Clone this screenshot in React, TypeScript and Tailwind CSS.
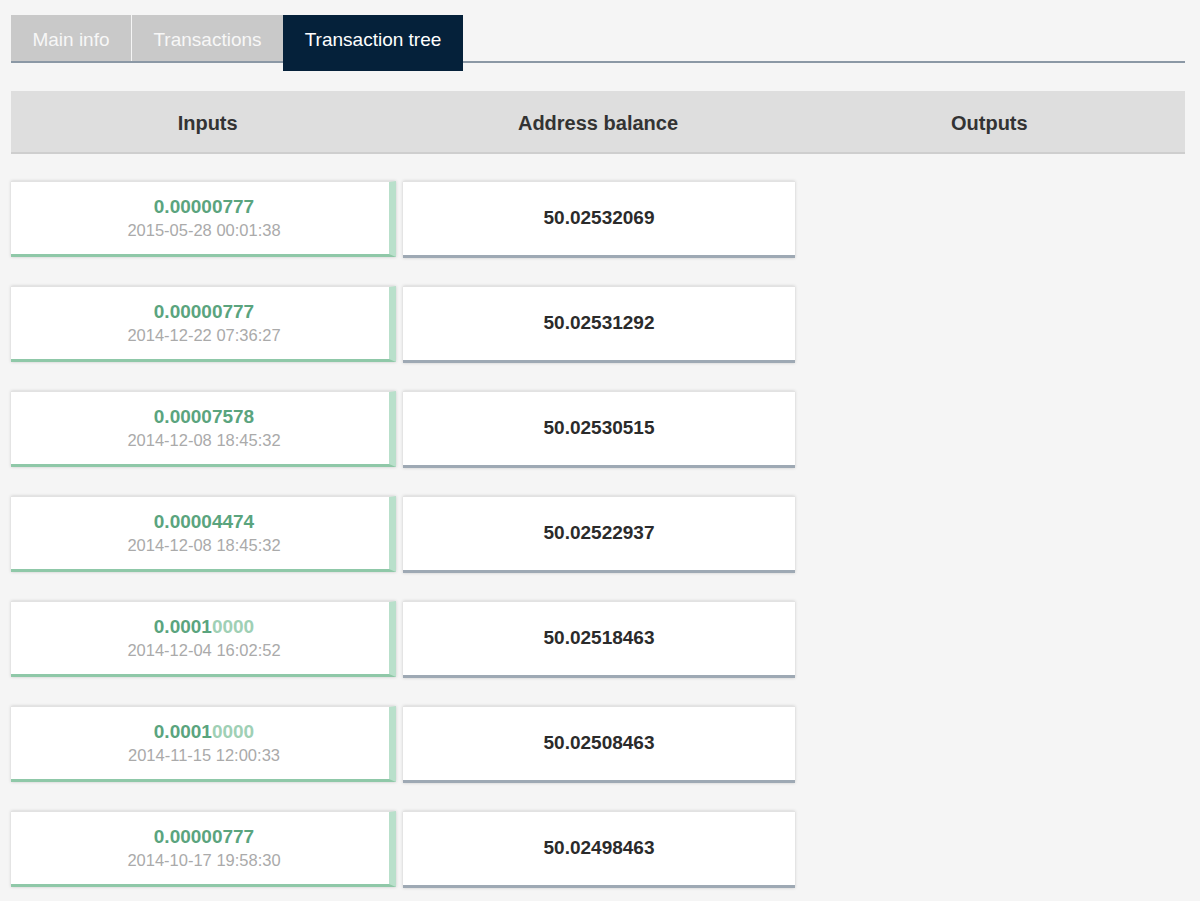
import React from 'react';

type Row = {
  amount: string;
  trail?: string;
  date: string;
  balance: string;
};

const rows: Row[] = [
  { amount: '0.00000777', date: '2015-05-28 00:01:38', balance: '50.02532069' },
  { amount: '0.00000777', date: '2014-12-22 07:36:27', balance: '50.02531292' },
  { amount: '0.00007578', date: '2014-12-08 18:45:32', balance: '50.02530515' },
  { amount: '0.00004474', date: '2014-12-08 18:45:32', balance: '50.02522937' },
  { amount: '0.0001', trail: '0000', date: '2014-12-04 16:02:52', balance: '50.02518463' },
  { amount: '0.0001', trail: '0000', date: '2014-11-15 12:00:33', balance: '50.02508463' },
  { amount: '0.00000777', date: '2014-10-17 19:58:30', balance: '50.02498463' },
];

const tabs = ['Main info', 'Transactions', 'Transaction tree'];

export default function App() {
  return (
    <div className="min-h-[901px] bg-[#f5f5f5] pl-[11px] pr-[15px] pt-[15px] font-[family-name:Liberation_Sans,Arial,sans-serif]">
      {/* Tabs */}
      <div className="flex items-start border-b-2 border-[#8b98a5] h-[48px]">
        {tabs.map((tab, i) => {
          const active = i === tabs.length - 1;
          return (
            <div
              key={tab}
              className={
                active
                  ? 'h-[56px] w-[180px] bg-[#05213a] text-white text-[19px] flex items-start pt-[11px] justify-center'
                  : `h-[46px] bg-[#c9c9c9] text-[#f7f7f7] text-[19px] flex items-start pt-[11px] justify-center ${
                      i === 0 ? 'w-[121px] border-r border-[#f5f5f5]' : 'w-[151px]'
                    }`
              }
            >
              {tab}
            </div>
          );
        })}
      </div>

      {/* Column header */}
      <div className="mt-[28px] grid grid-cols-3 h-[63px] pt-[3px] bg-[#dedede] border-b-2 border-[#cecece] text-[20px] font-bold text-[#333]">
        <div className="flex items-center justify-center pl-[2px]">Inputs</div>
        <div className="flex items-center justify-center">Address balance</div>
        <div className="flex items-center justify-center">Outputs</div>
      </div>

      {/* Rows */}
      <div className="mt-[27px] flex flex-col gap-[28px]">
        {rows.map((r, i) => (
          <div key={i} className="flex gap-[7px]">
            <div className="w-[385px] h-[76px] pl-[8px] bg-white border-t border-[#e2e2e2] border-r-[7px] border-r-[#b9e0cb] border-b-[3px] border-b-[#8fc8a8] shadow-[0_0_3px_rgba(0,0,0,0.18)] flex flex-col items-center justify-center">
              <div className="text-[19px] font-bold text-[#5aa47e] leading-[22px]">
                {r.amount}
                {r.trail && <span className="text-[#9fd0b5]">{r.trail}</span>}
              </div>
              <div className="text-[16.5px] text-[#aaaaaa] leading-[22px] mt-[1px]">{r.date}</div>
            </div>
            <div className="w-[392px] h-[77px] bg-white border-t border-[#e2e2e2] border-b-[3px] border-b-[#9ea9b4] shadow-[0_0_3px_rgba(0,0,0,0.18)] flex items-center justify-center">
              <span className="text-[19px] font-bold text-[#2b2b2b]">{r.balance}</span>
            </div>
          </div>
        ))}
      </div>
    </div>
  );
}
